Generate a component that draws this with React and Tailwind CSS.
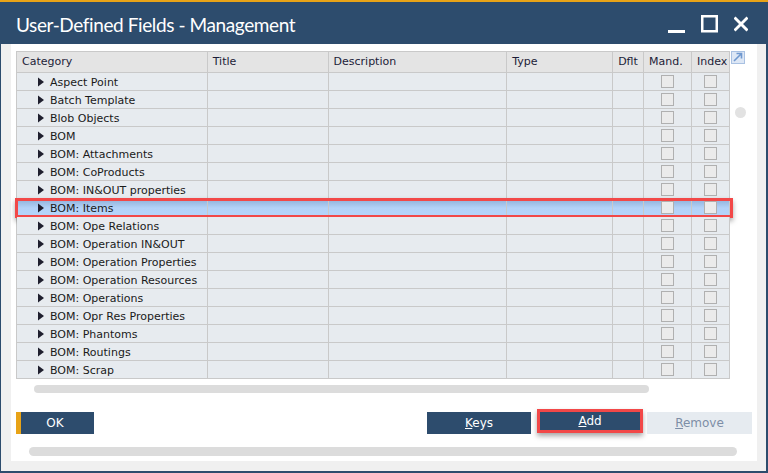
import React from "react";

const rows = [
  "Aspect Point",
  "Batch Template",
  "Blob Objects",
  "BOM",
  "BOM: Attachments",
  "BOM: CoProducts",
  "BOM: IN&OUT properties",
  "BOM: Items",
  "BOM: Ope Relations",
  "BOM: Operation IN&OUT",
  "BOM: Operation Properties",
  "BOM: Operation Resources",
  "BOM: Operations",
  "BOM: Opr Res Properties",
  "BOM: Phantoms",
  "BOM: Routings",
  "BOM: Scrap",
];

const cols = [
  { name: "Category", w: "w-[191px]" },
  { name: "Title", w: "w-[121px]" },
  { name: "Description", w: "w-[179px]" },
  { name: "Type", w: "w-[106px]" },
  { name: "Dflt", w: "w-[31px]" },
  { name: "Mand.", w: "w-[48px]" },
  { name: "Index", w: "w-[38px]" },
];

function Triangle() {
  return (
    <svg width="6" height="10" viewBox="0 0 6 10" className="shrink-0">
      <path d="M0 0.5 L6 5 L0 9.5 Z" fill="#1f1f2e" />
    </svg>
  );
}

function Check() {
  return <div className="w-[13px] h-[13px] border border-[#b0b0b0] bg-[#ebebeb]" />;
}

function Row({ label, selected }) {
  const base = selected
    ? "bg-gradient-to-b from-[#8fb0d8] via-[#b3d2f8] to-[#b5d4fa]"
    : "bg-[#e7ebef]";
  return (
    <div className={`relative flex h-[18px] ${base}`}>
      <div className="w-[191px] h-full border-r border-b border-[#c9c9c9] flex items-center pl-[21px] pt-[3px] gap-[6px]">
        <span className="flex items-center -mt-[3px]">
          <Triangle />
        </span>
        <span className="whitespace-nowrap">{label}</span>
      </div>
      <div className="w-[121px] h-full border-r border-b border-[#c9c9c9]" />
      <div className="w-[179px] h-full border-r border-b border-[#c9c9c9]" />
      <div className="w-[106px] h-full border-r border-b border-[#c9c9c9]" />
      <div className="w-[31px] h-full border-r border-b border-[#c9c9c9]" />
      <div className="w-[48px] h-full border-r border-b border-[#c9c9c9] flex justify-center pt-[2px]">
        <Check />
      </div>
      <div className="w-[38px] h-full border-r border-b border-[#c9c9c9] flex justify-center pt-[2px]">
        <Check />
      </div>
      {selected && (
        <div className="absolute top-[-1px] bottom-[-1px] left-[-2px] right-[-3px] border-[3px] border-[#f24848] shadow-[0_3px_5px_rgba(0,0,0,0.35)]" />
      )}
    </div>
  );
}

export default function App() {
  return (
    <div
      className="w-[768px] h-[473px] flex flex-col overflow-hidden bg-white text-[#1a1a1a]"
      style={{ fontFamily: '"DejaVu Sans", Verdana, sans-serif' }}
    >
      <div className="h-[2px] bg-[#e8a317] shrink-0" />
      <div className="h-[42px] shrink-0 bg-[#2d4c6d] flex items-center pl-[16px] pr-[20px]">
        <span
          className="text-white text-[19px] leading-none pt-[3px] tracking-[-0.4px] whitespace-nowrap"
          style={{ fontFamily: 'Lato, "Open Sans", sans-serif' }}
        >
          User-Defined Fields - Management
        </span>
        <div className="ml-auto flex items-center gap-[16px] pt-[3px]">
          <svg width="17" height="20" viewBox="0 0 17 20">
            <rect x="0" y="15" width="17" height="3" fill="#ffffff" />
          </svg>
          <svg width="17" height="20" viewBox="0 0 17 20">
            <rect x="1.25" y="1.25" width="14.5" height="15" fill="none" stroke="#ffffff" strokeWidth="2.5" />
          </svg>
          <svg width="14" height="20" viewBox="0 0 14 20">
            <path d="M1.5 3.5 L12.5 14.5 M12.5 3.5 L1.5 14.5" stroke="#ffffff" strokeWidth="3" strokeLinecap="square" />
          </svg>
        </div>
      </div>
      <div className="flex-1 flex flex-col bg-[#f0f0f0] border-l border-r-2 border-b-2 border-[#2d4c6d] pl-[10px] pr-[9px] pb-[10px]">
        <div className="flex-1 bg-white flex flex-col pl-[5px] pt-[7px] text-[11px]">
          <div className="flex">
            <div className="w-[714px] border-l border-[#c9c9c9]">
              <div className="flex h-[22px] bg-[#e4e4e4] border-t border-[#c9c9c9]">
                {cols.map((c) => (
                  <div
                    key={c.name}
                    className={`${c.w} h-full border-r border-b border-[#c9c9c9] flex items-center pl-[5px] pt-[1px] text-[#1c1c38] whitespace-nowrap overflow-hidden`}
                  >
                    {c.name}
                  </div>
                ))}
              </div>
              {rows.map((r) => (
                <Row key={r} label={r} selected={r === "BOM: Items"} />
              ))}
            </div>
            <div className="flex flex-col pl-[1px]">
              <svg width="14" height="13" viewBox="0 0 14 13">
                <rect x="0.5" y="0.5" width="13" height="12" fill="#dde7f5" stroke="#a9c1e2" />
                <path d="M3 10 L10.5 2.5 M5.5 2.5 L10.5 2.5 L10.5 7.5" stroke="#6f98cf" strokeWidth="1.6" fill="none" />
              </svg>
              <div className="mt-[43px] ml-[4px] w-[11px] h-[11px] rounded-full bg-[#e2e2e2]" />
            </div>
          </div>
          <div className="ml-[18px] mt-[6px] w-[615px] h-[8px] rounded-full bg-[#dcdcdc]" />
          <div className="flex items-start mt-[19px] text-[12px]">
            <div className="w-[78px] h-[22px] bg-[#2d4c6d] flex border-l-[5px] border-[#e8a317]">
              <span className="text-white m-auto pr-[5px]">OK</span>
            </div>
            <div className="ml-[333px] w-[104px] h-[22px] bg-[#2d4c6d] text-white flex items-center justify-center">
              <span><span className="underline">K</span>eys</span>
            </div>
            <div className="ml-[6px] mt-[-3px] w-[106px] h-[24px] border-[3px] border-[#f24848] bg-[#2d4c6d] text-white flex items-center justify-center shadow-[0_3px_5px_rgba(0,0,0,0.35)]">
              <span><span className="underline">A</span>dd</span>
            </div>
            <div className="ml-[4px] w-[105px] h-[22px] bg-[#e6ebf0] text-[#7d8ea6] flex items-center justify-center">
              <span><span className="underline">R</span>emove</span>
            </div>
          </div>
          <div className="ml-[13px] mt-[13px] w-[708px] h-[9px] rounded-full bg-[#dcdcdc]" />
        </div>
      </div>
    </div>
  );
}
